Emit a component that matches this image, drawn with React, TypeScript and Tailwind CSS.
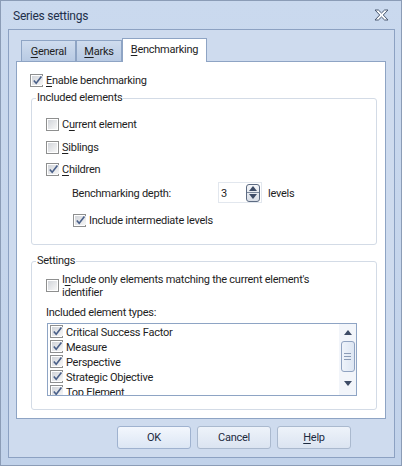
import React from "react";

function Check({ checked = false }: { checked?: boolean }) {
  return (
    <span className="w-[13px] h-[13px] shrink-0 border border-[#8e8f8f] bg-white p-px flex">
      <span className="flex-1 bg-gradient-to-br from-[#d2d5da] to-[#f7f7f7] flex items-center justify-center">
        {checked && (
          <svg width="11" height="11" viewBox="0 0 11 11">
            <path d="M1.8 5.4 4.2 8.3 9.4 1.6" fill="none" stroke="#4a6089" strokeWidth="1.6" />
          </svg>
        )}
      </span>
    </span>
  );
}

function Key({ children }: { children: React.ReactNode }) {
  return <u className="underline underline-offset-[2px] decoration-1">{children}</u>;
}

function CloseIcon() {
  return (
    <svg width="15" height="12" viewBox="0 0 15 12">
      <path
        d="M1 1h3.4L7.5 4 10.6 1H14L9.3 6 14 11H10.6L7.5 8 4.4 11H1l4.7-5z"
        fill="#fbfcfe"
        stroke="#4a5970"
        strokeWidth="1"
        strokeLinejoin="round"
      />
    </svg>
  );
}

function Tab({ label, active = false, w }: { label: React.ReactNode; active?: boolean; w: string }) {
  if (active) {
    return (
      <div className={`${w} h-[24px] -mb-px relative z-10 bg-white border border-b-0 border-[#8ea4c4] flex items-center justify-center pb-[1px]`}>
        {label}
      </div>
    );
  }
  return (
    <div className={`${w} h-[21px] bg-gradient-to-b from-[#cfdcee] to-[#b8cae3] border border-b-0 border-[#8ea4c4] flex items-center justify-center pt-px`}>
      {label}
    </div>
  );
}

function Row({ checked, children, className = "" }: { checked?: boolean; children: React.ReactNode; className?: string }) {
  return (
    <div className={`h-[16px] flex items-center gap-[3px] ${className}`}>
      <Check checked={checked} />
      <span className="pt-[2px]">{children}</span>
    </div>
  );
}

function Group({ title, children, className = "" }: { title: string; children: React.ReactNode; className?: string }) {
  return (
    <fieldset className={`ml-[14px] w-[346px] border border-[#d3dbe6] rounded-[3px] ${className}`}>
      <legend className="ml-[4px] px-px leading-[14px]">{title}</legend>
      {children}
    </fieldset>
  );
}

function Tri({ up = false }: { up?: boolean }) {
  return (
    <svg width="8" height="5" viewBox="0 0 8 5">
      <path d={up ? "M0 5 4 0 8 5z" : "M0 0 4 5 8 0z"} fill="#3e4c66" />
    </svg>
  );
}

function Button({ children, isDefault = false }: { children: React.ReactNode; isDefault?: boolean }) {
  return (
    <button
      className={`w-[74px] h-[23px] rounded-[3px] border ${
        isDefault ? "border-[#9fb2cf] from-[#f3f7fd] to-[#dce6f4]" : "border-[#aab9ce] from-[#eef3fa] to-[#dbe4f1]"
      } bg-gradient-to-b flex items-center justify-center pt-px text-[#1d2a3f]`}
    >
      {children}
    </button>
  );
}

const types = ["Critical Success Factor", "Measure", "Perspective", "Strategic Objective", "Top Element"];

export default function App() {
  return (
    <div className="w-[402px] h-[466px] bg-gradient-to-b from-[#cad9ee] to-[#c1d2ea] border border-[#8b9cb6] flex flex-col text-[11px] leading-[14px] tracking-[-0.25px] text-[#1e1e1e] font-['Roboto',sans-serif]">
      <div className="h-[28px] flex items-center justify-between pl-[12px] pr-[12px]">
        <span className="text-[12px] text-[#1e2f4a] pt-px">Series settings</span>
        <CloseIcon />
      </div>

      <div className="ml-[7px] mr-[6px] h-[429px] border border-[#8ca1c2] bg-[#cedbee] px-[7px] pt-[8px] flex flex-col">
        <div className="h-[23px] pl-[5px] flex items-end">
          <Tab w="w-[55px]" label={<span><Key>G</Key>eneral</span>} />
          <Tab w="w-[46px]" label={<span><Key>M</Key>arks</span>} />
          <Tab w="w-[85px]" active label={<span><Key>B</Key>enchmarking</span>} />
        </div>

        <div className="w-[370px] h-[358px] border border-[#8ea4c4] bg-white pt-[10px] flex flex-col">
          <Row checked className="ml-[13px]">
            <Key>E</Key>nable benchmarking
          </Row>

          <Group title="Included elements" className="mt-[3px]">
            <div className="pl-[14px] pb-[16px]">
              <Row className="mt-[11px]">
                C<Key>u</Key>rrent element
              </Row>
              <Row className="mt-[7px]">
                <Key>S</Key>iblings
              </Row>
              <Row checked className="mt-[6px]">
                <Key>C</Key>hildren
              </Row>
              <div className="mt-[5px] h-[21px] flex items-center ml-[26px]">
                <span className="w-[146px] pt-[2px]">Benchmarking depth:</span>
                <div className="w-[44px] h-[21px] border border-[#e2e7ee] flex items-center pl-[2px] pr-[1px]">
                  <span className="flex-1 pt-[2px]">3</span>
                  <div className="w-[14px] h-[18px] rounded-[3px] border border-[#5d6b82] bg-gradient-to-b from-[#f4f6f9] to-[#d9dee6] flex flex-col">
                    <div className="flex-1 flex items-center justify-center border-b border-[#7b879a]">
                      <Tri up />
                    </div>
                    <div className="flex-1 flex items-center justify-center">
                      <Tri />
                    </div>
                  </div>
                </div>
                <span className="ml-[6px] pt-[2px]">levels</span>
              </div>
              <Row checked className="mt-[9px] ml-[27px]">
                Include intermediate levels
              </Row>
            </div>
          </Group>

          <Group title="Settings" className="mt-[9px]">
            <div className="pl-[14px] pb-[13px]">
              <div className="mt-[4px] h-[26px] flex items-center gap-[3px]">
                <Check />
                <span className="leading-[13px] pt-[2px]">
                  I<Key>n</Key>clude only elements matching the current element's
                  <br />
                  identifier
                </span>
              </div>
              <div className="mt-[6px] h-[16px] flex items-center pt-[2px]">Included element types:</div>
              <div className="mt-[3px] ml-px w-[310px] h-[73px] border border-[#8ea4c4] flex overflow-hidden">
                <div className="flex-1 overflow-hidden">
                  {types.map((t) => (
                    <div key={t} className="h-[15px] flex items-center gap-[3px] pl-[2px]">
                      <Check checked />
                      <span className="pt-[2px]">{t}</span>
                    </div>
                  ))}
                </div>
                <div className="w-[17px] bg-[#f2f5fa] flex flex-col items-center">
                  <div className="h-[17px] flex items-center justify-center">
                    <Tri up />
                  </div>
                  <div className="w-[14px] h-[31px] rounded-[3px] border border-[#90a3c1] bg-gradient-to-r from-[#eef3fa] to-[#dde6f3] flex flex-col items-center justify-center gap-[2px]">
                    <span className="w-[7px] h-px bg-[#8a9bb6]" />
                    <span className="w-[7px] h-px bg-[#8a9bb6]" />
                    <span className="w-[7px] h-px bg-[#8a9bb6]" />
                  </div>
                  <div className="flex-1 flex items-center justify-center">
                    <Tri />
                  </div>
                </div>
              </div>
            </div>
          </Group>
        </div>

        <div className="mt-[7px] pl-[101px] flex gap-[6px]">
          <Button isDefault>OK</Button>
          <Button>Cancel</Button>
          <Button>
            <span>
              <Key>H</Key>elp
            </span>
          </Button>
        </div>
      </div>
    </div>
  );
}
